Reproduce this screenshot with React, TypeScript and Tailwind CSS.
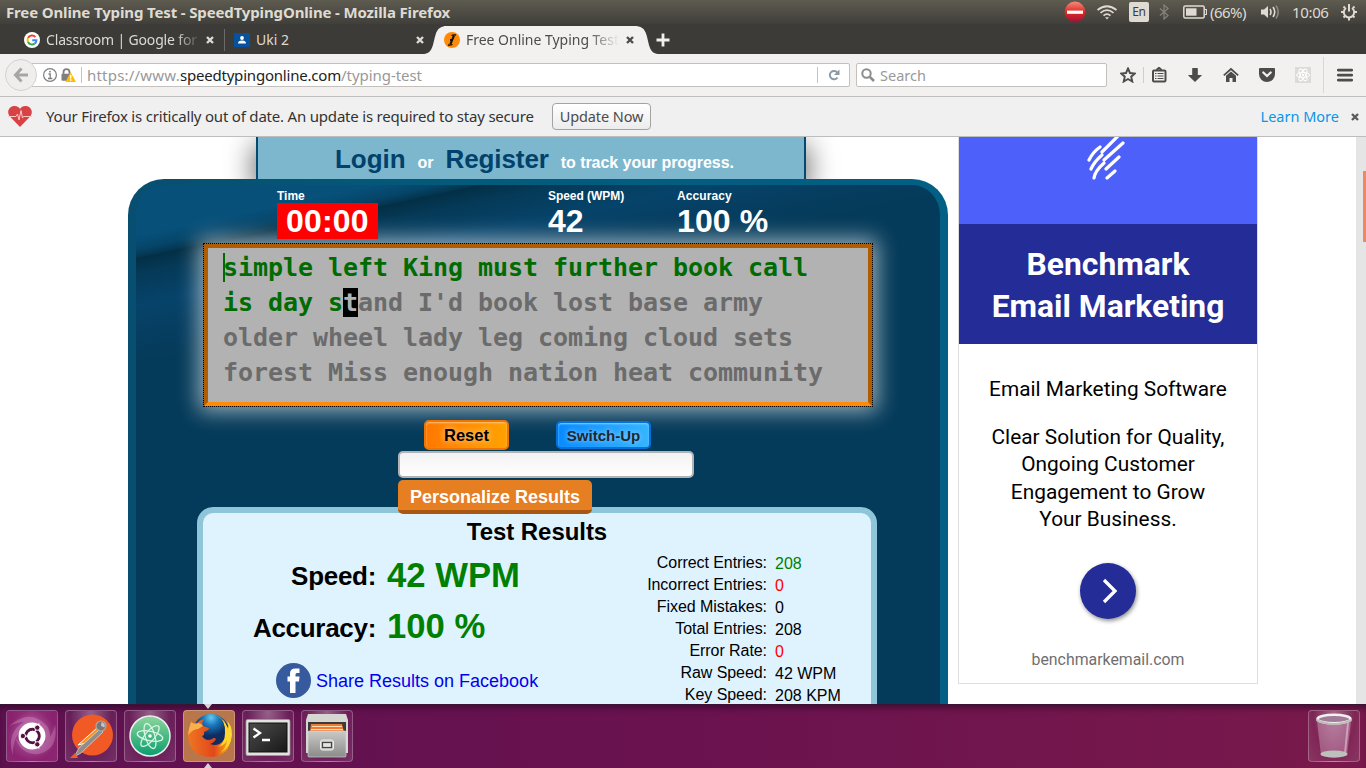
import React from 'react';

const UI = "font-['Noto_Sans','Open_Sans',sans-serif]";

function Close({ color, className }: { color: string; className: string }) {
  return (
    <svg viewBox="0 0 8 8" className={`size-2 shrink-0 ${className}`}>
      <path d="M1 1L7 7M7 1L1 7" stroke={color} strokeWidth="2.4" />
    </svg>
  );
}

function TitleBar() {
  return (
    <header className="flex h-6 items-center bg-gradient-to-b from-[#5e5b50] to-[#403f3a] pl-1.5 text-[#dfdbd2]">
      <h1 className="w-[470px] whitespace-nowrap text-[15px] leading-6 font-bold tracking-[-0.14px]">
        Free Online Typing Test - SpeedTypingOnline - Mozilla Firefox
      </h1>
      <div className="flex flex-1 items-center justify-end pr-2">
        <svg viewBox="0 0 22 22" className="mr-[10px] size-[22px]">
          <defs>
            <linearGradient id="stop" x2="0" y2="1">
              <stop offset="0" stopColor="#f58b7c" />
              <stop offset=".5" stopColor="#e02824" />
              <stop offset="1" stopColor="#9b1238" />
            </linearGradient>
          </defs>
          <circle cx="11" cy="11" r="10.4" fill="url(#stop)" />
          <rect x="3" y="9.6" width="16" height="3.2" fill="#fff" />
        </svg>
        <svg viewBox="0 0 22 16" className="mr-[11px] h-4 w-[22px]" fill="none" stroke="#dfdbd2" strokeWidth="1.7">
          <path d="M1.5 6Q11-1.5 20.500 6M4.500 8.800Q11 3.500 17.500 8.800M7.500 11.600Q11 8.500 14.500 11.600" />
          <path d="M9 13.200L11 15.500L13 13.200Z" fill="#dfdbd2" stroke="none" />
        </svg>
        <span className="flex size-5 items-center justify-center rounded-[2px] bg-[#dfdbd2] text-[12px] text-[#3c3b37] tracking-[-0.3px]">
          En
        </span>
        <svg viewBox="0 0 10 16" className="mx-[10px] h-4 w-2.5" fill="none" stroke="#86837b" strokeWidth="1.2">
          <path d="M1 4.500L9 11.500L5 15V1L9 4.500L1 11.500" />
        </svg>
        <svg viewBox="0 0 24 14" className="mr-[3px] ml-1 h-3.5 w-6">
          <rect x=".8" y="1" width="20.400" height="12" rx="1.500" fill="none" stroke="#dfdbd2" strokeWidth="1.500" />
          <rect x="3" y="3.300" width="10.500" height="7.400" fill="#dfdbd2" />
          <path d="M22 4.500H23.500V9.500H22" fill="none" stroke="#dfdbd2" strokeWidth="1.200" />
        </svg>
        <span className="w-[38px] text-[15px] leading-6 tracking-[-0.55px] whitespace-nowrap">(66%)</span>
        <svg viewBox="0 0 20 16" className="mx-3 h-4 w-5" fill="none" strokeWidth="1.600">
          <path d="M1 5.500H4L8 2V14L4 10.500H1Z" fill="#dfdbd2" />
          <path d="M10 5Q12 8 10 11M13 3Q16.500 8 13 13" stroke="#dfdbd2" />
          <path d="M16 1.500Q20.500 8 16 14.500" stroke="#8b887f" />
        </svg>
        <span className="w-[38px] text-[15px] leading-6 tracking-[-0.35px] whitespace-nowrap">10:06</span>
        <svg viewBox="0 0 18 18" className="ml-[10px] size-[18px]" fill="none" stroke="#dfdbd2">
          <path d="M6 5A5.200 5.200 0 1 0 12 5" strokeWidth="2" />
          <path d="M9 1V8.500" strokeWidth="2" />
          <path d="M9 15V17.500M1 9H3.500M14.500 9H17M3.500 3.500L5 5M13 13L14.500 14.500M14.500 3.500L13 5M3.500 14.500L5 13" strokeWidth="2" />
        </svg>
      </div>
    </header>
  );
}

function TabBar() {
  return (
    <nav className="flex h-[30px] bg-[#3c3b37] pt-0.5 text-[14px] leading-7 text-[#dddad5]">
      <div className="flex w-[200px] items-center pl-6">
        <svg viewBox="0 0 16 16" className="size-4 shrink-0">
          <circle cx="8" cy="8" r="8" fill="#fff" />
          <g fill="none" strokeWidth="2">
            <path d="M11.400 5A4.500 4.500 0 0 0 4 6" stroke="#ea4335" />
            <path d="M4 6A4.500 4.500 0 0 0 4 10" stroke="#fbbc05" />
            <path d="M4 10A4.500 4.500 0 0 0 10.800 11.500" stroke="#34a853" />
            <path d="M10.800 11.500A4.400 4.400 0 0 0 12.400 8.200H8.200" stroke="#4285f4" />
          </g>
        </svg>
        <span className="ml-1.5 w-[154px] shrink-0 overflow-hidden whitespace-nowrap tracking-[-0.15px] [mask-image:linear-gradient(to_right,black_84%,transparent_101%)]">
          Classroom | Google for
        </span>
        <Close color="#dddad5" className="ml-1.5" />
      </div>
      <div className="ml-6 flex w-[200px] items-center">
        <i className="h-[22px] w-px bg-[#6b6a66]" />
        <svg viewBox="0 0 16 14" className="ml-[9px] h-3.5 w-4 shrink-0">
          <rect width="16" height="14" fill="#08519c" />
          <circle cx="8" cy="5" r="1.900" fill="#fff" />
          <path d="M4 10.500Q4 7.600 8 7.600Q12 7.600 12 10.500Z" fill="#fff" />
        </svg>
        <span className="ml-1.5 w-[160px] shrink-0 whitespace-nowrap">Uki 2</span>
        <Close color="#dddad5" className="" />
      </div>
      <div className="flex w-[232px] text-[#4d4d4d]">
        <svg viewBox="0 0 24 28" className="h-7 w-6 shrink-0">
          <path d="M0 28C9 27.500 9 17 11.500 9C13.500 2 17 0 24 0V28Z" fill="#f2f1f0" />
        </svg>
        <div className="-ml-1 flex w-[190px] shrink-0 items-center bg-[#f2f1f0]">
          <svg viewBox="0 0 16 16" className="size-4 shrink-0">
            <circle cx="8" cy="8" r="8" fill="#ff8908" />
            <path d="M7.500 3.500Q9 2.500 12 3M4 13Q6.500 13.500 8.500 12.500" stroke="#111" strokeWidth="1.300" fill="none" />
            <path d="M10 3.500L6.300 12.500M6 8H7.500" stroke="#111" strokeWidth="2" fill="none" />
          </svg>
          <span className="ml-1.5 w-[153px] shrink-0 overflow-hidden whitespace-nowrap tracking-[-0.02px] [mask-image:linear-gradient(to_right,black_80%,transparent)]">
            Free Online Typing Test
          </span>
          <Close color="#4d4d4d" className="ml-[7px]" />
        </div>
        <svg viewBox="0 0 24 28" className="h-7 w-6 shrink-0">
          <path d="M24 28C15 27.500 15 17 12.500 9C10.500 2 7 0 0 0V28Z" fill="#f2f1f0" />
        </svg>
      </div>
      <svg viewBox="0 0 14 14" className="mt-[7px] size-3.5">
        <path d="M7 .5V13.500M.5 7H13.500" stroke="#f2f1f0" strokeWidth="2.800" />
      </svg>
    </nav>
  );
}

function NavBar() {
  return (
    <div className="flex h-[43px] items-center border-b border-[#c1bfbd] bg-[#f2f1f0] pl-[5px] text-[14px]">
      <div className="z-10 flex size-8 shrink-0 items-center justify-center rounded-full border border-[#d4d2d0] bg-[#efeeed]">
        <svg viewBox="0 0 16 16" className="size-4">
          <path d="M8.500 1.500L2.500 8L8.500 14.500M3 8H15" stroke="#a6a6a6" strokeWidth="3" fill="none" />
        </svg>
      </div>
      <div className="-ml-[6px] flex h-6 w-[819px] shrink-0 items-center rounded-[2px] border border-[#c3c0bd] bg-white">
        <svg viewBox="0 0 14 14" className="ml-[11px] size-3.5 shrink-0" fill="none" stroke="#7f7f7f">
          <circle cx="7" cy="7" r="6.400" strokeWidth="1.200" />
          <path d="M5.500 6H7.200V10.500M5 10.500H9.300" strokeWidth="1.300" />
          <circle cx="7" cy="3.700" r=".9" fill="#7f7f7f" stroke="none" />
        </svg>
        <svg viewBox="0 0 15 14" className="ml-1 h-3.5 w-[15px] shrink-0">
          <path d="M2.500 7V4.200A3 3 0 0 1 8.500 4.200V7" stroke="#7f7f7f" strokeWidth="1.800" fill="none" />
          <rect x=".5" y="5.800" width="9.500" height="7" rx="1" fill="#7f7f7f" />
          <path d="M9.500 4L15 14H4.500Z" fill="#ffbf00" />
          <path d="M9.700 7V10.500M9.700 11.300V12.800" stroke="#fff" strokeWidth="1.400" />
        </svg>
        <i className="ml-[5px] h-4 w-px bg-[#c3c3c3]" />
        <span className="ml-[5px] w-[730px] whitespace-nowrap text-[15px] text-[#999] tracking-[-0.05px]">
          <span className="tracking-[0.2px]">https://www.</span>
          <span className="text-[#222] tracking-[-0.2px]">speedtypingonline.com</span>/typing-test
        </span>
        <i className="h-4 w-px bg-[#c3c3c3]" />
        <svg viewBox="0 0 12 12" className="ml-[10px] size-3 shrink-0">
          <path d="M9.300 3.500A4.200 4.200 0 1 0 9.500 8.500" stroke="#8b98a5" strokeWidth="2" fill="none" />
          <path d="M11.500 .5V6H6Z" fill="#8b98a5" />
        </svg>
      </div>
      <div className="ml-1.5 flex h-6 w-[251px] shrink-0 items-center rounded-[2px] border border-[#c3c0bd] bg-white text-[#999]">
        <svg viewBox="0 0 14 14" className="ml-1 size-3.5" fill="none" stroke="#8c8c8c">
          <circle cx="5.500" cy="5.500" r="4.200" strokeWidth="2" />
          <path d="M8.800 8.800L13 13" strokeWidth="2.600" />
        </svg>
        <span className="mt-0.5 ml-[5px] text-[14.500px]">Search</span>
      </div>
      <svg viewBox="0 0 16 16" className="ml-[13px] size-4 shrink-0" fill="none" stroke="#4c4c4c" strokeWidth="1.900">
        <path d="M8 1.500L10 6L14.800 6.500L11.200 9.700L12.300 14.500L8 12L3.700 14.500L4.800 9.700L1.200 6.500L6 6Z" />
      </svg>
      <i className="ml-[7px] h-4 w-px bg-[#d0cecc]" />
      <svg viewBox="0 0 16 16" className="ml-[7px] size-4 shrink-0" fill="none" stroke="#4c4c4c">
        <rect x="2" y="3.500" width="12.500" height="11" rx="1" strokeWidth="2" />
        <path d="M5.500 3L8 .8L10.500 3" strokeWidth="2" />
        <path d="M4 6.500H5.500M6.500 6.500H12.500M4 9H5.500M6.500 9H12.500M4 11.500H5.500M6.500 11.500H12.500" strokeWidth="1.200" />
      </svg>
      <svg viewBox="0 0 16 16" className="ml-5 size-4 shrink-0" fill="#4c4c4c">
        <path d="M5.200 1.500Q5.200 1 5.700 1H10.300Q10.800 1 10.800 1.500V8H14.500Q15 8 14.700 8.500L8 15L1.300 8.500Q1 8 1.500 8H5.200Z" />
      </svg>
      <svg viewBox="0 0 16 16" className="ml-5 size-4 shrink-0">
        <path d="M.8 8.300L8 2L15.200 8.300" stroke="#4c4c4c" strokeWidth="1.700" fill="none" />
        <path d="M3 8.800L8 4.500L13 8.800V15H9.500V11H6.500V15H3Z" fill="#4c4c4c" />
      </svg>
      <svg viewBox="0 0 16 16" className="ml-5 size-4 shrink-0">
        <path d="M0 2Q0 1 1 1H15Q16 1 16 2V7A8 8 0 0 1 0 7Z" fill="#4c4c4c" />
        <path d="M4.300 5.500L8 9L11.700 5.500" stroke="#f2f1f0" strokeWidth="2.200" fill="none" strokeLinecap="round" />
      </svg>
      <svg viewBox="0 0 16 16" className="ml-5 size-4 shrink-0">
        <rect width="16" height="16" fill="#dcdbda" />
        <g fill="none" stroke="#fff" strokeWidth="1">
          <ellipse cx="8" cy="8" rx="6.500" ry="2.600" />
          <ellipse cx="8" cy="8" rx="6.500" ry="2.600" transform="rotate(60 8 8)" />
          <ellipse cx="8" cy="8" rx="6.500" ry="2.600" transform="rotate(120 8 8)" />
        </g>
        <circle cx="8" cy="8" r="1.200" fill="#fff" />
      </svg>
      <i className="ml-3 h-[36px] w-px bg-[#d9d7d5]" />
      <svg viewBox="0 0 16 14" className="ml-[13px] h-3.5 w-4 shrink-0">
        <path d="M1.300 2.200H14.700M1.300 7.200H14.700M1.300 12.200H14.700" stroke="#4c4c4c" strokeWidth="2.800" strokeLinecap="round" />
      </svg>
    </div>
  );
}

function NoticeBar() {
  return (
    <div className="flex h-10 items-center border-b border-[#bdbdbd] bg-[#f0f0f0] pl-2 text-[15px] text-[#333]">
      <svg viewBox="0 0 24 21" className="h-[21px] w-6 shrink-0">
        <path d="M12 21L1.800 10.500C-2 5.500 1.500 0 6.500 0C9.500 0 11.500 1.500 12 3C12.500 1.500 14.500 0 17.500 0C22.500 0 26 5.500 22.200 10.500Z" fill="#d74345" />
        <path d="M0 10.500H8L9.500 8L11 14L13 4.500L14.500 12L15.500 10.500H24" stroke="#f6c9c6" strokeWidth="1" fill="none" />
      </svg>
      <span className="ml-3.5 w-[506px] whitespace-nowrap tracking-[-0.2px]">
        Your Firefox is critically out of date. An update is required to stay secure
      </span>
      <button className="h-[27px] w-[99px] shrink-0 whitespace-nowrap rounded border border-[#a5a3a1] bg-gradient-to-b from-white to-[#ececec] text-[14.500px] tracking-[-0.1px] text-[#4c4c4c]">
        Update Now
      </button>
      <span className="mr-3 ml-auto text-[14.500px] text-[#0996e8]">Learn More</span>
      <Close color="#5c5c5c" className="mr-[7px]" />
    </div>
  );
}

const GREEN = 'text-[#008000]';
const RED = 'text-[#ff0000]';
const stats = [
  ['Correct Entries:', '208', GREEN],
  ['Incorrect Entries:', '0', RED],
  ['Fixed Mistakes:', '0', ''],
  ['Total Entries:', '208', ''],
  ['Error Rate:', '0', RED],
  ['Raw Speed:', '42 WPM', ''],
  ['Key Speed:', '208 KPM', ''],
];

function Typing() {
  return (
    <section className="w-[820px] shrink-0">
      <div className="ml-32 flex h-[42px] w-[550px] items-center border-x-2 border-[#024a73] bg-[#7db7ce] pt-0.5 pl-[77px] text-[16px] font-bold whitespace-nowrap text-white shadow-[0_10px_28px_2px_rgba(0,0,0,0.6)]">
        <span className="text-[26px] tracking-[-0.05px] text-[#00426b]">Login</span>
        <span className="mt-2 ml-3">or</span>
        <span className="ml-3 text-[26px] tracking-[-0.1px] text-[#00426b]">Register</span>
        <span className="mt-2 ml-3 tracking-[-0.05px]">to track your progress.</span>
      </div>
      <div className="relative h-[560px] rounded-t-[36px] border-x-8 border-t-6 border-transparent [background:linear-gradient(168deg,#07507a_0,#07507a_50px,#064569_63px,#04354e_71px,#032f46_72px,#053a58_88px,#06436a_118px,#063f63_140px,#053b5a_175px)_padding-box,linear-gradient(90deg,#084e70,#045a7a_40%,#045f85)_border-box]">
        <div className="flex h-[58px] pt-1 pl-[141px] font-bold text-white">
          <div className="w-[271px]">
            <div className="text-[12px] leading-[14px]">Time</div>
            <div className="h-9 w-[101px] bg-[#ff0000] pl-[9px] text-[32px] leading-9 tracking-[0.2px]">00:00</div>
          </div>
          <div className="w-[129px]">
            <div className="text-[12px] leading-[14px] tracking-[-0.05px]">Speed (WPM)</div>
            <div className="text-[32px] leading-9">42</div>
          </div>
          <div>
            <div className="text-[12px] leading-[14px] tracking-[0.1px]">Accuracy</div>
            <div className="text-[32px] leading-9 tracking-[0.1px]">100 %</div>
          </div>
        </div>
        <div className="ml-[67px] h-[164px] w-[670px] border border-dotted border-black bg-[#b25c02] shadow-[0_0_20px_4px_rgba(255,255,255,0.6)]">
          <div className="h-full border-4 border-t-[#b25c02] border-r-[#b25c02] border-b-[#ff8b08] border-l-[#b25c02] bg-[#b2b2b2] pt-0.5 pl-[15px] font-['DejaVu_Sans_Mono',monospace] text-[25px] leading-[35px] font-bold tracking-[-0.05px] whitespace-pre text-[#6b6b6b]">
            <div className="text-[#006b00]">
              <span className="-mr-0.5 -mt-1 inline-block h-[29px] w-0.5 bg-[#006b00] align-middle" />
              simple left King must further book call
            </div>
            <div>
              <span className="text-[#006b00]">is day s</span>
              <span className="bg-black text-[#b2b2b2]">t</span>and I'd book lost base army
            </div>
            <div>older wheel lady leg coming cloud sets</div>
            <div>forest Miss enough nation heat community</div>
          </div>
        </div>
        <div className="mt-[13px] ml-[288px] flex h-[30px] items-center font-bold">
          <button className="h-[30px] w-[85px] rounded-[5px] border-2 border-[#f07400] bg-gradient-to-r from-[#ff7800] to-[#ffa200] pt-px text-[16.500px] leading-[25px] text-black shadow-[inset_0_1px_2px_#ffc580] [text-shadow:0_0_6px_#ffe0b0]">
            Reset
          </button>
          <button className="ml-[47px] h-7 w-[95px] rounded-[5px] border-2 border-[#0571dc] bg-gradient-to-r from-[#078aff] to-[#35b4ff] pt-px text-[15px] leading-[23px] text-[#1d2730] shadow-[inset_0_1px_2px_#8bd3ff] [text-shadow:0_0_5px_#a0d8ff]">
            Switch-Up
          </button>
        </div>
        <div className="mt-px ml-[262px] h-[27px] w-[296px] rounded-[5px] border-2 border-[#b1b3b5] bg-gradient-to-b from-[#f2f2f4] to-white" />
        <button className="relative z-10 mt-0.5 ml-[262px] block h-[34px] w-[194px] rounded-[5px] border-b-4 border-[#a95814] bg-[#e67e22] pt-0.5 text-[18px] leading-[30px] font-bold text-white">
          Personalize Results
        </button>
        <div className="-mt-[7px] ml-[61px] h-[260px] w-[680px] rounded-t-[16px] border-6 border-[#8ec5d9] bg-[#dff3ff] text-black">
          <h2 className="h-[37px] pt-1 text-center text-[24px] leading-[30px] font-bold tracking-[-0.05px] whitespace-nowrap">
            Test Results
          </h2>
          <div className="flex">
            <div className="w-[380px]">
              <div className="flex h-[51px] items-center font-bold">
                <span className="mt-0.5 w-[173px] text-right text-[26px] tracking-[-0.3px]">Speed:</span>
                <span className="-mt-0.5 ml-[11px] text-[34.670px] text-[#008000]">42 WPM</span>
              </div>
              <div className="flex h-[51px] items-center font-bold">
                <span className="mt-[3px] w-[173px] text-right text-[26px] tracking-[-0.3px]">Accuracy:</span>
                <span className="-mt-0.5 ml-[11px] text-[34.670px] text-[#008000]">100 %</span>
              </div>
              <div className="mt-[11px] ml-[73px] flex items-center">
                <svg viewBox="0 0 35 35" className="size-[35px]">
                  <circle cx="17.500" cy="17.500" r="17.500" fill="#365a9d" />
                  <path d="M14 30V18.500H11.500V13.500H14V10.500Q14 5.500 19.500 5.500H23.500V10H21Q19.500 10 19.500 11.500V13.500H23.500L23 18.500H19.500V30Z" fill="#fff" />
                </svg>
                <span className="mt-0.5 ml-[5px] text-[18px] text-[#0000ee]">Share Results on Facebook</span>
              </div>
            </div>
            <div className="mt-0.5 flex-1">
              {stats.map(([label, value, tone]) => (
                <div key={label} className="flex h-[22px] text-[16px] leading-[22px]">
                  <span className="w-[184px] text-right tracking-[-0.06px] whitespace-nowrap">{label}</span>
                  <span className={`mt-px ml-2 whitespace-nowrap ${tone}`}>{value}</span>
                </div>
              ))}
            </div>
          </div>
        </div>
      </div>
    </section>
  );
}

function Ad() {
  return (
    <aside className="ml-2.5 h-[547px] w-[300px] shrink-0 border border-t-0 border-[#dedede] bg-white text-center font-['Roboto',sans-serif] text-black">
      <div className="flex h-[87px] justify-center bg-[#4e60fa]">
        <svg viewBox="0 0 38 44" className="-ml-1 h-[44px] w-[38px]" stroke="#fff" strokeWidth="3.200" strokeLinecap="round" fill="none">
          <path d="M2 23Q6 15 13 10M15 15L32-2M4 32Q7 25 15 18M17 23L36 6M7 41Q8 34 17 26M19 32L32 20M20 41L28 34" />
        </svg>
      </div>
      <div className="h-[120px] bg-[#242c98] pt-[19px] text-[31.800px] leading-[42px] font-bold text-white">
        Benchmark
        <br />
        Email Marketing
      </div>
      <p className="mt-[31px] text-[20.800px] leading-7">Email Marketing Software</p>
      <p className="mt-[21px] text-[20.850px] leading-[27.400px]">
        Clear Solution for Quality,
        <br />
        Ongoing Customer
        <br />
        Engagement to Grow
        <br />
        Your Business.
      </p>
      <div className="mx-auto mt-[29px] flex size-14 items-center justify-center rounded-full bg-[#242c98] shadow-[1px_2px_4px_rgba(0,0,0,0.45)]">
        <svg viewBox="0 0 20 28" className="ml-1 h-7 w-5">
          <path d="M4 3L15 14L4 25" stroke="#fff" strokeWidth="3.300" fill="none" />
        </svg>
      </div>
      <p className="mt-[29px] text-[15.850px] leading-6 text-[#6f6f6f]">benchmarkemail.com</p>
    </aside>
  );
}

function Tile({ active, children }: { active?: boolean; children: React.ReactNode }) {
  return (
    <div
      className={`flex size-[52px] shrink-0 items-center justify-center rounded-[4px] border border-white/25 ${
        active ? 'bg-[#b9764a]' : 'bg-[radial-gradient(ellipse_at_top,rgba(255,255,255,0.34),rgba(255,255,255,0.06)_60%,rgba(255,255,255,0.13))]'
      }`}
    >
      {children}
    </div>
  );
}

function Launcher() {
  return (
    <footer className="relative flex h-16 items-start gap-[7px] border-t border-[#3b1435] bg-gradient-to-r from-[#5e114f] via-[#6a124f] to-[#79194b] px-1.5 pt-[5px] shadow-[inset_0_5px_6px_-2px_rgba(30,0,30,0.5)]">
      <Tile>
        <svg viewBox="0 0 52 52" className="size-[50px]">
          <defs>
            <radialGradient id="dash">
              <stop stopColor="#d27fc0" />
              <stop offset="1" stopColor="#952277" />
            </radialGradient>
          </defs>
          <rect width="52" height="52" rx="3" fill="url(#dash)" opacity=".75" />
          <g fill="#e9b8dd" opacity=".28">
            <path d="M2 16Q24-4 42 16Q50 30 38 44Q44 28 34 17Q22 6 2 16Z" />
            <path d="M6 46Q-2 20 22 9Q36 6 44 20Q32 10 20 16Q6 24 6 46Z" />
            <path d="M50 14Q54 40 32 45Q14 45 9 28Q18 41 32 37Q46 32 50 14Z" />
          </g>
          <circle cx="26" cy="26" r="14" fill="#fff" />
          <circle cx="26.500" cy="26" r="7" fill="none" stroke="#54133f" strokeWidth="3.200" />
          <path d="M26.500 26L14 26M26.500 26L33.500 13M26.500 26L33.500 39" stroke="#fff" strokeWidth="1.300" />
          <circle cx="26.500" cy="26" r="5.400" fill="#fff" />
          <g fill="#54133f" stroke="#fff" strokeWidth="1">
            <circle cx="16.500" cy="26" r="2.800" />
            <circle cx="31.500" cy="17.300" r="2.800" />
            <circle cx="31.500" cy="34.700" r="2.800" />
          </g>
        </svg>
      </Tile>
      <Tile>
        <svg viewBox="0 0 50 50" className="size-[50px]">
          <circle cx="26.500" cy="24" r="20.500" fill="#f15a24" />
          <path d="M31 17L35 20L20 32L12 34Z" fill="#f7941e" stroke="#fff" strokeWidth="1" />
          <path d="M34 18L37 21L15 42L8 46L13 37Z" fill="#8d8d8d" stroke="#ddd" strokeWidth=".7" />
          <circle cx="35" cy="15" r="5" fill="#777" stroke="#a9a9a9" strokeWidth="1.200" />
          <path d="M35 15L35.500 11A4 4 0 0 1 38.500 16.500Z" fill="#c4c4c4" />
          <path d="M4 47L9 42L12 47Z" fill="#f15a24" />
        </svg>
      </Tile>
      <Tile>
        <svg viewBox="0 0 50 50" className="size-[50px]">
          <defs>
            <linearGradient id="atom" x2="0" y2="1">
              <stop stopColor="#8dd69c" />
              <stop offset="1" stopColor="#0a9d6e" />
            </linearGradient>
          </defs>
          <circle cx="25" cy="25" r="20" fill="url(#atom)" stroke="#eee" strokeWidth="1.500" />
          <g fill="none" stroke="#d9f5e4" strokeWidth="1.300">
            <ellipse cx="25" cy="25" rx="13" ry="4.800" transform="rotate(12 25 25)" />
            <ellipse cx="25" cy="25" rx="13" ry="4.800" transform="rotate(73 25 25)" />
            <ellipse cx="25" cy="25" rx="13" ry="4.800" transform="rotate(130 25 25)" />
          </g>
          <circle cx="25" cy="25" r="1.800" fill="#fff" />
        </svg>
      </Tile>
      <Tile active>
        <svg viewBox="0 0 50 50" className="size-[50px]">
          <defs>
            <radialGradient id="globe" cx=".5" cy=".1">
              <stop stopColor="#63c9f2" />
              <stop offset=".45" stopColor="#1977bb" />
              <stop offset="1" stopColor="#102d62" />
            </radialGradient>
            <linearGradient id="fox" x1="0" x2="1">
              <stop stopColor="#ee7623" />
              <stop offset=".6" stopColor="#e2481a" />
              <stop offset="1" stopColor="#fcb813" />
            </linearGradient>
          </defs>
          <circle cx="27" cy="21" r="18" fill="url(#globe)" />
          <path d="M7 9Q9 13 13 12Q16 9 20 8Q17 12 19 15L25 17Q25 19 20 21Q21 24 18 25Q22 31 28 28Q30 26 32 28Q30 32 26 33Q34 36 39 30Q44 24 40 12Q47 18 47 27Q45 46 26 46Q5 45 4 25Q4 18 7 14Z" fill="url(#fox)" />
          <path d="M33 5Q42 9 41 22Q41 32 34 36Q42 34 43 28Q43 37 36 42Q47 36 48 24Q48 14 43 10Q45 15 44 18Q41 8 33 5Z" fill="#ffd72e" />
          <path d="M7 11Q10 14 15 12Q18 13 19 15L14 18Q9 18 4 24Q5 16 7 11Z" fill="#f8b04a" />
        </svg>
      </Tile>
      <Tile>
        <svg viewBox="0 0 50 50" className="size-[50px]">
          <defs>
            <linearGradient id="screen" x2="1" y2="1">
              <stop stopColor="#4a4a4a" />
              <stop offset=".5" stopColor="#333" />
              <stop offset="1" stopColor="#171717" />
            </linearGradient>
          </defs>
          <rect x="3" y="8.500" width="44" height="36" rx="1.500" fill="#e2e2df" stroke="#999" strokeWidth=".8" />
          <rect x="6" y="12" width="38" height="29" fill="url(#screen)" stroke="#111" />
          <path d="M10.500 17.500L17 22L10.500 26.500M19 29H27" stroke="#fff" strokeWidth="2.300" fill="none" />
        </svg>
      </Tile>
      <Tile>
        <svg viewBox="0 0 50 50" className="size-[50px]">
          <defs>
            <linearGradient id="drawer" x2="0" y2="1">
              <stop stopColor="#c9c9c6" />
              <stop offset="1" stopColor="#8b8b8a" />
            </linearGradient>
          </defs>
          <path d="M6 3H44L46 9V42H4V9Z" fill="#d6d6d3" />
          <rect x="6" y="11" width="38" height="14" fill="#3b3b38" />
          <path d="M9 13H40L42 21H8Z" fill="#f07a32" />
          <path d="M10 15.500H40M9 18.500H41" stroke="#ffdfb8" strokeWidth="1.200" />
          <rect x="6" y="20" width="38" height="26" rx="1" fill="url(#drawer)" stroke="#dcdcda" strokeWidth=".6" />
          <rect x="18.500" y="29" width="13" height="10" rx="2" fill="#c9c9c6" stroke="#ededeb" />
          <rect x="20.500" y="31.500" width="9" height="5" fill="#e4e4e2" stroke="#444" strokeWidth="1.200" />
        </svg>
      </Tile>
      <div className="ml-auto">
        <Tile>
          <svg viewBox="0 0 50 50" className="size-[50px]">
            <path d="M8 10H42L38 44Q25 50 12 44Z" fill="#dcb4cf" opacity=".4" />
            <path d="M39 12L36 42" stroke="#efdcea" strokeWidth="2" opacity=".5" />
            <ellipse cx="25" cy="43" rx="13.500" ry="3.600" fill="#bdc0bb" />
            <ellipse cx="25" cy="8" rx="16.500" ry="4.300" fill="#a37a98" stroke="#f0f0ee" strokeWidth="2.600" />
            <path d="M7.500 9Q25 17 42.500 9" fill="none" stroke="#bdbdb8" strokeWidth="2" />
          </svg>
        </Tile>
      </div>
      <svg viewBox="0 0 8 64" className="absolute -top-px left-[204px] h-16 w-2" fill="#d8d3d6">
        <path d="M0 0H8L4 5Z" />
        <path d="M0 64H8L4 59Z" />
      </svg>
    </footer>
  );
}

export default function App() {
  return (
    <div className={`flex h-[768px] w-[1366px] flex-col overflow-hidden ${UI}`}>
      <TitleBar />
      <TabBar />
      <NavBar />
      <NoticeBar />
      <main className="flex h-[567px] shrink-0 overflow-hidden bg-white pl-32 font-['Liberation_Sans',Arial,sans-serif]">
        <Typing />
        <Ad />
        <div className="ml-auto flex h-full w-2.5 justify-end bg-[#e5e5e5] pt-[34px]">
          <div className="h-[71px] w-[3px] bg-[#f08763]" />
        </div>
      </main>
      <Launcher />
    </div>
  );
}
